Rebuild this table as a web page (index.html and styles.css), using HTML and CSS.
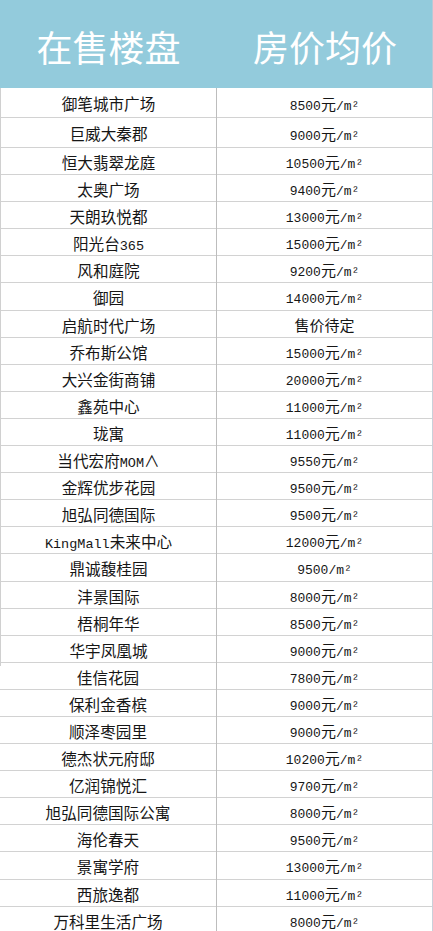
FILE: index.html
```html
<!DOCTYPE html>
<html lang="zh-CN">
<head>
<meta charset="utf-8">
<title>在售楼盘 房价均价</title>
<link rel="stylesheet" href="styles.css">
</head>
<body>
<div class="sheet">
  <div class="head">
    <div class="hcell">在售楼盘</div>
    <div class="hcell">房价均价</div>
  </div>
  <div class="row tall edge"><div class="name">御笔城市广场</div><div class="price"><span class="d">8500</span>元<span class="d">/m²</span></div></div>
  <div class="row tall edge"><div class="name">巨威大秦郡</div><div class="price"><span class="d">9000</span>元<span class="d">/m²</span></div></div>
  <div class="row edge"><div class="name">恒大翡翠龙庭</div><div class="price"><span class="d">10500</span>元<span class="d">/m²</span></div></div>
  <div class="row edge"><div class="name">太奥广场</div><div class="price"><span class="d">9400</span>元<span class="d">/m²</span></div></div>
  <div class="row edge"><div class="name">天朗玖悦都</div><div class="price"><span class="d">13000</span>元<span class="d">/m²</span></div></div>
  <div class="row edge"><div class="name">阳光台<span class="a">365</span></div><div class="price"><span class="d">15000</span>元<span class="d">/m²</span></div></div>
  <div class="row edge"><div class="name">风和庭院</div><div class="price"><span class="d">9200</span>元<span class="d">/m²</span></div></div>
  <div class="row edge"><div class="name">御园</div><div class="price"><span class="d">14000</span>元<span class="d">/m²</span></div></div>
  <div class="row edge"><div class="name">启航时代广场</div><div class="price">售价待定</div></div>
  <div class="row edge"><div class="name">乔布斯公馆</div><div class="price"><span class="d">15000</span>元<span class="d">/m²</span></div></div>
  <div class="row edge"><div class="name">大兴金街商铺</div><div class="price"><span class="d">20000</span>元<span class="d">/m²</span></div></div>
  <div class="row edge"><div class="name">鑫苑中心</div><div class="price"><span class="d">11000</span>元<span class="d">/m²</span></div></div>
  <div class="row edge"><div class="name">珑寓</div><div class="price"><span class="d">11000</span>元<span class="d">/m²</span></div></div>
  <div class="row edge"><div class="name">当代宏府<span class="a">MOM</span>∧</div><div class="price"><span class="d">9550</span>元<span class="d">/m²</span></div></div>
  <div class="row edge"><div class="name">金辉优步花园</div><div class="price"><span class="d">9500</span>元<span class="d">/m²</span></div></div>
  <div class="row edge"><div class="name">旭弘同德国际</div><div class="price"><span class="d">9500</span>元<span class="d">/m²</span></div></div>
  <div class="row edge"><div class="name"><span class="a">KingMall</span>未来中心</div><div class="price"><span class="d">12000</span>元<span class="d">/m²</span></div></div>
  <div class="row edge"><div class="name">鼎诚馥桂园</div><div class="price"><span class="d">9500/m²</span></div></div>
  <div class="row edge"><div class="name">沣景国际</div><div class="price"><span class="d">8000</span>元<span class="d">/m²</span></div></div>
  <div class="row edge"><div class="name">梧桐年华</div><div class="price"><span class="d">8500</span>元<span class="d">/m²</span></div></div>
  <div class="row edge"><div class="name">华宇凤凰城</div><div class="price"><span class="d">9000</span>元<span class="d">/m²</span></div></div>
  <div class="row"><div class="name">佳信花园</div><div class="price"><span class="d">7800</span>元<span class="d">/m²</span></div></div>
  <div class="row"><div class="name">保利金香槟</div><div class="price"><span class="d">9000</span>元<span class="d">/m²</span></div></div>
  <div class="row"><div class="name">顺泽枣园里</div><div class="price"><span class="d">9000</span>元<span class="d">/m²</span></div></div>
  <div class="row"><div class="name">德杰状元府邸</div><div class="price"><span class="d">10200</span>元<span class="d">/m²</span></div></div>
  <div class="row"><div class="name">亿润锦悦汇</div><div class="price"><span class="d">9700</span>元<span class="d">/m²</span></div></div>
  <div class="row"><div class="name">旭弘同德国际公寓</div><div class="price"><span class="d">8000</span>元<span class="d">/m²</span></div></div>
  <div class="row"><div class="name">海伦春天</div><div class="price"><span class="d">9500</span>元<span class="d">/m²</span></div></div>
  <div class="row"><div class="name">景寓学府</div><div class="price"><span class="d">13000</span>元<span class="d">/m²</span></div></div>
  <div class="row"><div class="name">西旅逸都</div><div class="price"><span class="d">11000</span>元<span class="d">/m²</span></div></div>
  <div class="row"><div class="name">万科里生活广场</div><div class="price"><span class="d">8000</span>元<span class="d">/m²</span></div></div>
</div>
</body>
</html>
```

FILE: styles.css
```css
html, body {
  margin: 0;
  padding: 0;
  background: #ffffff;
}

body {
  width: 433px;
  height: 931px;
  overflow: hidden;
  font-family: "Noto Sans CJK SC", "Noto Sans", sans-serif;
  color: #161616;
}

.sheet {
  width: 433px;
  display: flex;
  flex-direction: column;
}

.head {
  height: 88px;
  background: #93cbdc;
  display: grid;
  grid-template-columns: 217px 216px;
  border-right: 1px solid #b9c9d6;
  box-sizing: border-box;
}

.hcell {
  display: flex;
  align-items: center;
  justify-content: center;
  color: #ffffff;
  font-size: 36px;
  font-weight: 400;
  padding-top: 4px;
}

.row {
  height: 27.1px;
  box-sizing: border-box;
  display: grid;
  grid-template-columns: 217px 216px;
  border-bottom: 1px solid #d2d2d2;
  flex-shrink: 0;
}

.row.tall {
  height: 30px;
}

.row.edge .name {
  border-left: 1px solid #d0d0d0;
}

.name,
.price {
  display: block;
  text-align: center;
  box-sizing: border-box;
  line-height: 26px;
  padding-top: 1px;
  white-space: nowrap;
  font-weight: 400;
}

.tall .name,
.tall .price {
  line-height: 29px;
}

.name {
  font-size: 15.6px;
  border-right: 1px solid #bdbdbd;
}

.price {
  font-size: 15px;
  border-right: 1px solid #c9d0da;
}

.a {
  font-family: "Liberation Mono", monospace;
  font-size: 13.5px;
}

.d {
  font-family: "Liberation Mono", monospace;
  font-size: 13px;
}
```
